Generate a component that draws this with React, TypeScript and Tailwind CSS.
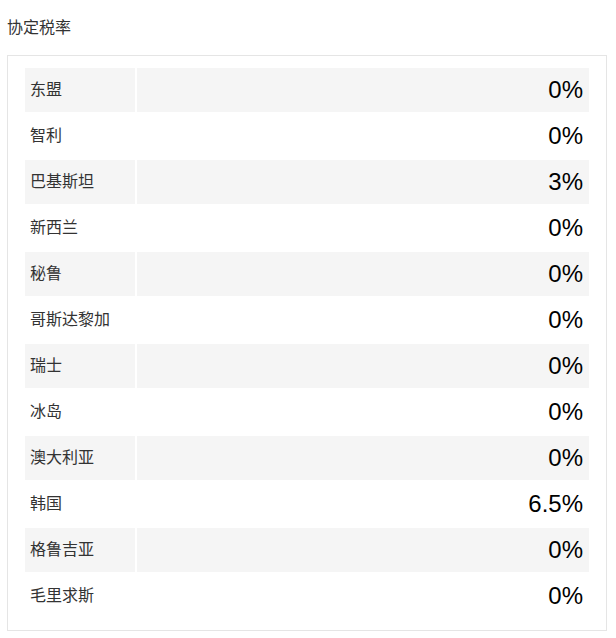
const rates: { country: string; rate: string }[] = [
  { country: '东盟', rate: '0%' },
  { country: '智利', rate: '0%' },
  { country: '巴基斯坦', rate: '3%' },
  { country: '新西兰', rate: '0%' },
  { country: '秘鲁', rate: '0%' },
  { country: '哥斯达黎加', rate: '0%' },
  { country: '瑞士', rate: '0%' },
  { country: '冰岛', rate: '0%' },
  { country: '澳大利亚', rate: '0%' },
  { country: '韩国', rate: '6.5%' },
  { country: '格鲁吉亚', rate: '0%' },
  { country: '毛里求斯', rate: '0%' },
];

export default function App() {
  return (
    <div
      className="min-h-[638px] w-[616px] bg-white px-[7px] pt-4 text-[#333]"
      style={{ fontFamily: '"Liberation Sans", Arial, "Noto Sans CJK SC", sans-serif' }}
    >
      <h2 className="mb-[15px] text-[16px] leading-6 font-normal">协定税率</h2>
      <div className="w-[600px] border border-[#e5e5e5] px-[17px] py-3">
        <div className="grid grid-cols-[110px_1fr] gap-[2px]">
          {rates.map((row, i) => {
            const striped = i % 2 === 0;
            return (
              <div key={row.country} className="contents">
                <div
                  className={
                    striped
                      ? 'flex h-[44px] items-center bg-[#f5f5f5] pl-[5px] text-[16px]'
                      : 'flex h-[44px] items-center bg-white pl-[5px] text-[16px]'
                  }
                >
                  {row.country}
                </div>
                <div
                  className={
                    striped
                      ? 'flex h-[44px] items-center justify-end bg-[#f5f5f5] pr-[6px] text-[24px] text-black'
                      : 'flex h-[44px] items-center justify-end bg-white pr-[6px] text-[24px] text-black'
                  }
                >
                  {row.rate}
                </div>
              </div>
            );
          })}
        </div>
      </div>
    </div>
  );
}
